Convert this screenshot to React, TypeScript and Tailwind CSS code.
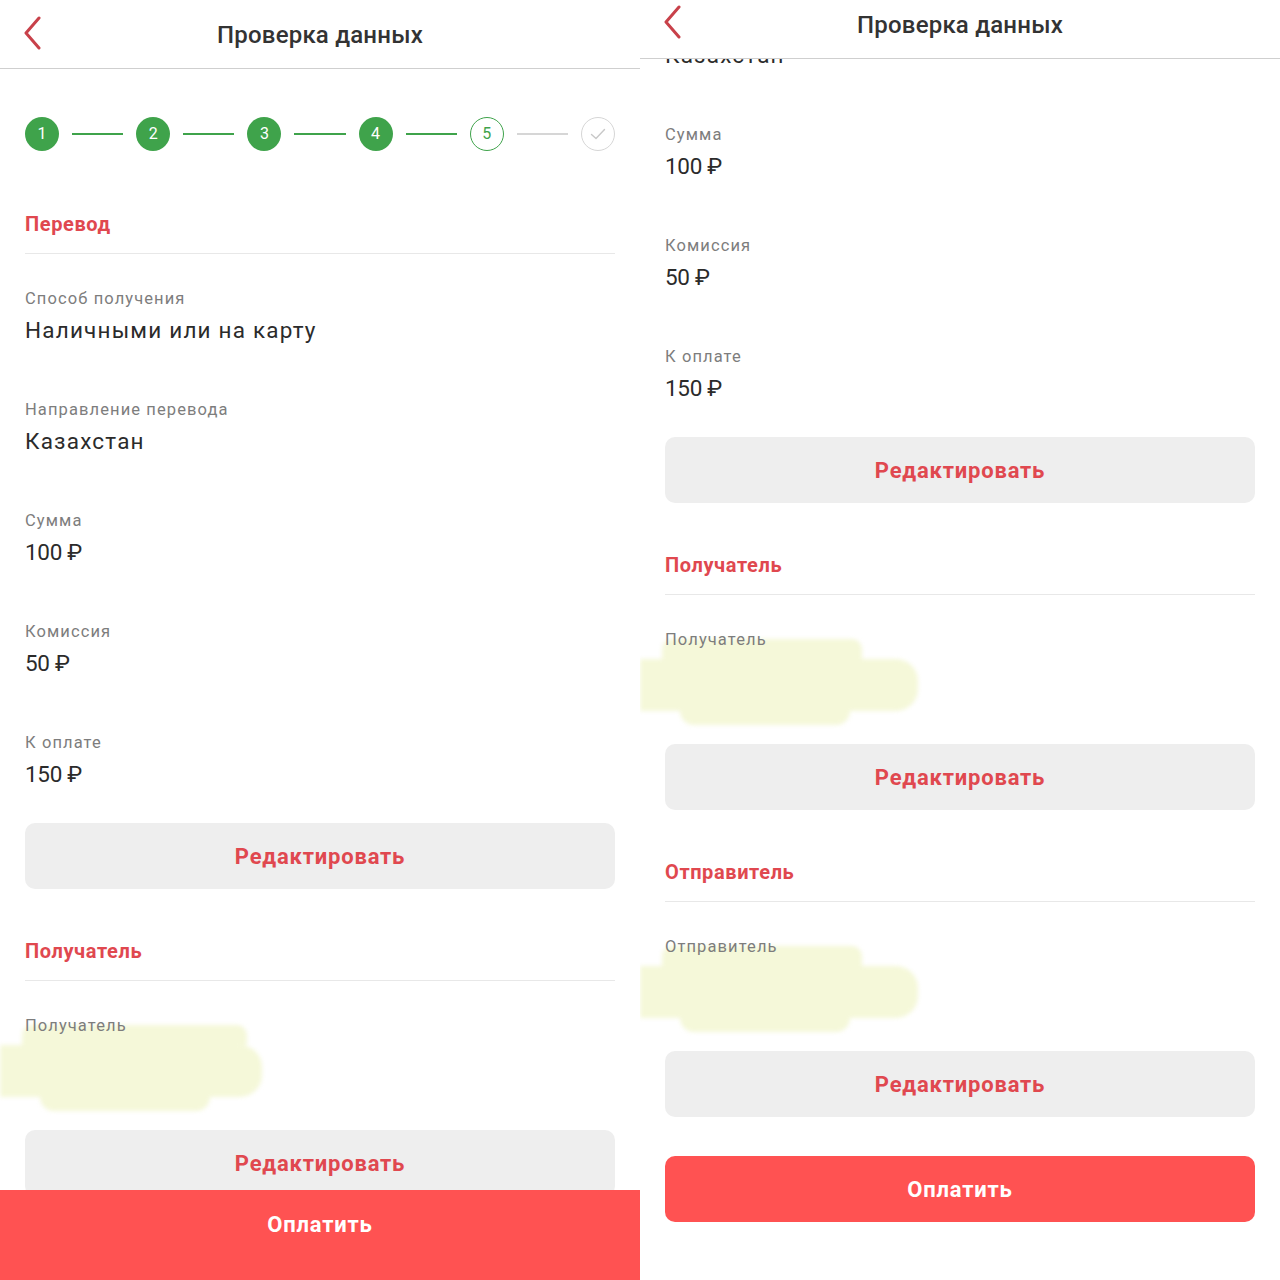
import React from "react";

const font = { fontFamily: "Roboto, 'Noto Sans', sans-serif" };

const Chevron = () => (
  <svg width="18" height="34" viewBox="0 0 18 34" fill="none">
    <path d="M15 2 L2 17 L15 32" stroke="#C8414A" strokeWidth="3" strokeLinecap="round" strokeLinejoin="round" />
  </svg>
);

const Header = ({ tall }: { tall?: boolean }) => (
  <div
    className={`relative z-10 flex shrink-0 items-center justify-center border-b border-[#cfcfcf] bg-white ${
      tall ? "h-[69px]" : "h-[59px]"
    }`}
  >
    <div className={`absolute left-[24px] ${tall ? "top-[16px]" : "top-[5px]"}`}>
      <Chevron />
    </div>
    <h1 className={`text-[24px] font-medium tracking-[0.2px] text-[#333] ${tall ? "mt-[1px]" : "-mt-[8px]"}`}>
      Проверка данных
    </h1>
  </div>
);

const Step = ({ n, state }: { n: number; state: "done" | "current" | "todo" }) => {
  if (state === "done")
    return (
      <div className="flex h-[34px] w-[34px] shrink-0 items-center justify-center rounded-full bg-[#3fa34b] text-[16px] text-white">
        {n}
      </div>
    );
  if (state === "current")
    return (
      <div className="flex h-[34px] w-[34px] shrink-0 items-center justify-center rounded-full border-[1.5px] border-[#3fa34b] text-[16px] text-[#3fa34b]">
        {n}
      </div>
    );
  return (
    <div className="flex h-[34px] w-[34px] shrink-0 items-center justify-center rounded-full border-[1.5px] border-[#d6d6d6]">
      <svg width="16" height="12" viewBox="0 0 16 12" fill="none">
        <path d="M1.5 6.5 L6 10.5 L14.5 1.5" stroke="#c8c8c8" strokeWidth="1.4" strokeLinecap="round" strokeLinejoin="round" />
      </svg>
    </div>
  );
};

const Stepper = () => (
  <div className="flex items-center px-[25px] pt-[48px]">
    {[1, 2, 3, 4, 5].map((n) => (
      <React.Fragment key={n}>
        <Step n={n} state={n < 5 ? "done" : "current"} />
        <div className={`mx-[13px] h-[1.5px] flex-1 ${n < 5 ? "bg-[#3fa34b]" : "bg-[#d6d6d6]"}`} />
      </React.Fragment>
    ))}
    <Step n={6} state="todo" />
  </div>
);

const SectionTitle = ({ children, top }: { children: React.ReactNode; top: string }) => (
  <div className={`mx-[25px] border-b border-[#e8e8e8] pb-[17px] ${top}`}>
    <h2 className="text-[20px] font-bold leading-[24px] tracking-[0.6px] text-[#e0484f]">{children}</h2>
  </div>
);

const Label = ({ children }: { children: React.ReactNode }) => (
  <div className="relative z-[1] text-[16.5px] leading-[20px] tracking-[1.1px] text-[#7d7d7d]">{children}</div>
);

const Field = ({ label, value, num }: { label: string; value: string; num?: boolean }) => (
  <div className="px-[25px] pt-[35px] pb-[21px]">
    <Label>{label}</Label>
    <div
      className={`mt-[7px] text-[22.5px] leading-[28px] text-[#2b2b2b] ${num ? "tracking-[-0.3px]" : "tracking-[1.2px]"}`}
    >
      {value}
    </div>
  </div>
);

// painted-over personal data
const Hidden = ({ label, wide }: { label: string; wide?: boolean }) => (
  <div className="relative px-[25px] pt-[35px]">
    <div className="absolute left-0 top-[44px] h-[86px] w-[262px] blur-[2px]">
      <div className={`ml-[22px] h-[20px] rounded-t-[10px] bg-[#f5f8d9] ${wide ? "w-[200px]" : "w-[225px]"}`} />
      <div className={`h-[52px] rounded-r-[22px] bg-[#f5f8d9] ${wide ? "w-[278px]" : "w-[262px]"}`} />
      <div className="ml-[40px] h-[14px] w-[170px] rounded-b-[16px] bg-[#f5f8d9]" />
    </div>
    <Label>{label}</Label>
    <div className="h-[94px]" />
  </div>
);

const EditButton = ({ top }: { top?: string }) => (
  <button
    className={`mx-[25px] flex h-[66px] shrink-0 items-center justify-center rounded-[10px] bg-[#eeeeee] text-[22px] font-bold tracking-[0.8px] text-[#e0484f] ${
      top ?? ""
    }`}
  >
    Редактировать
  </button>
);

const Amounts = () => (
  <>
    <Field label="Сумма" value="100 ₽" num />
    <Field label="Комиссия" value="50 ₽" num />
    <Field label="К оплате" value="150 ₽" num />
    <EditButton top="mt-[14px]" />
    <SectionTitle top="mt-[50px]">Получатель</SectionTitle>
  </>
);

export default function App() {
  return (
    <div className="flex h-[1280px] w-[1280px] bg-white" style={font}>
      <div className="relative flex h-full w-[640px] flex-col overflow-hidden">
        <Header tall />
        <div className="flex flex-col">
          <Stepper />
          <SectionTitle top="mt-[61px]">Перевод</SectionTitle>
          <Field label="Способ получения" value="Наличными или на карту" />
          <Field label="Направление перевода" value="Казахстан" />
          <Amounts />
          <Hidden label="Получатель" />
          <EditButton />
        </div>
        <div className="absolute bottom-0 left-0 right-0 z-10 flex h-[90px] justify-center bg-[#ff5252] pt-[21px]">
          <span className="text-[22px] font-bold leading-[28px] tracking-[0.8px] text-white">Оплатить</span>
        </div>
      </div>
      <div className="flex h-full w-[640px] flex-col overflow-hidden">
        <Header />
        <div className="flex-1 overflow-hidden">
          <div className="mt-[-80px] flex flex-col">
            <Field label="Направление перевода" value="Казахстан" />
            <Amounts />
            <Hidden label="Получатель" wide />
            <EditButton />
            <SectionTitle top="mt-[50px]">Отправитель</SectionTitle>
            <Hidden label="Отправитель" wide />
            <EditButton />
            <button className="mx-[25px] mt-[39px] flex h-[66px] shrink-0 items-center justify-center rounded-[10px] bg-[#ff5252] text-[22px] font-bold tracking-[0.8px] text-white">
              Оплатить
            </button>
          </div>
        </div>
      </div>
    </div>
  );
}
